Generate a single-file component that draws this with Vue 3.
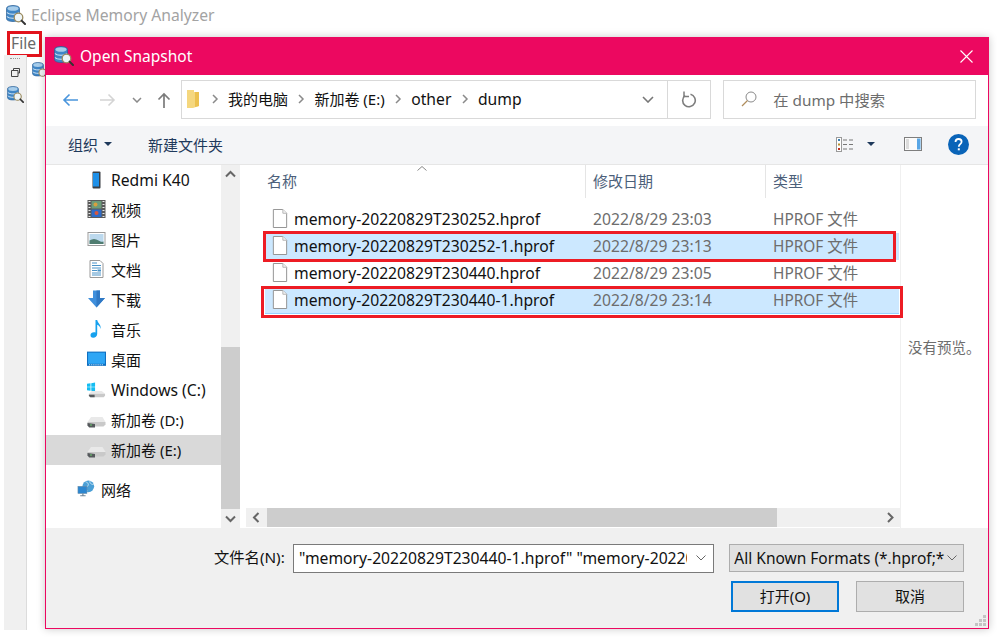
<script setup>
const navItems = [
  { label: 'Redmi K40', icon: 'i-phone', latin: true },
  { label: '视频', icon: 'i-video' },
  { label: '图片', icon: 'i-picture' },
  { label: '文档', icon: 'i-doc' },
  { label: '下载', icon: 'i-down' },
  { label: '音乐', icon: 'i-music' },
  { label: '桌面', icon: 'i-desk' },
  { label: 'Windows (C:)', icon: 'i-win', latin: true },
  { label: '新加卷 (D:)', icon: 'i-drive' },
  { label: '新加卷 (E:)', icon: 'i-drive', active: true },
]
const files = [
  { name: 'memory-20220829T230252.hprof', date: '2022/8/29 23:03' },
  { name: 'memory-20220829T230252-1.hprof', date: '2022/8/29 23:13', selected: true, mark: 'mark-a' },
  { name: 'memory-20220829T230440.hprof', date: '2022/8/29 23:05' },
  { name: 'memory-20220829T230440-1.hprof', date: '2022/8/29 23:14', selected: true, focus: true, mark: 'mark-b' },
]
const crumbs = [
  { text: '我的电脑' },
  { text: '新加卷 (E:)' },
  { text: 'other', latin: true },
  { text: 'dump', latin: true },
]
</script>

<template>
  <div class="page">
    <svg class="defs" width="0" height="0" aria-hidden="true">
      <defs>
        <symbol id="i-db" viewBox="0 0 20 20">
          <path d="M0.5 3.500C0.5 1.500 3.500 0.5 7 0.5s6.500 1 6.500 3v10c0 2-3 3-6.500 3s-6.500-1-6.500-3z" fill="#3f86c6" stroke="#2c5f93" stroke-width=".7"/>
          <ellipse cx="7" cy="3.500" rx="5.500" ry="2.300" fill="#a8cdea"/>
          <path d="M1 7.500c2 2.400 10 2.400 12 0M1 11.500c2 2.400 10 2.400 12 0" fill="none" stroke="#d6e8f6" stroke-width="1.100"/>
          <circle cx="12.500" cy="12.500" r="4.300" fill="#eef5f7" stroke="#9a8a5e" stroke-width="1.300"/>
          <path d="M15.600 15.600l3.400 3.400" stroke="#333" stroke-width="2" stroke-linecap="round"/>
        </symbol>
        <symbol id="i-file" viewBox="0 0 16 20">
          <path d="M1 .5h10l4 4v15H1z" fill="#fff" stroke="#8f8f8f"/>
          <path d="M11 .5v4h4" fill="#f2f2f2" stroke="#b5b5b5"/>
        </symbol>
        <symbol id="i-phone" viewBox="0 0 18 18">
          <rect x="5" y="0.500" width="8" height="17" rx="1" fill="#3a3f45"/>
          <rect x="5.500" y="2" width="6" height="13.500" fill="#1e90e8"/>
        </symbol>
        <symbol id="i-video" viewBox="0 0 18 18">
          <rect x="0" y="0" width="18" height="18" fill="#5a5a5a"/>
          <path d="M1 1.500h2M1 4.500h2M1 7.500h2M1 10.500h2M1 13.500h2M1 16.500h2M15 1.500h2M15 4.500h2M15 7.500h2M15 10.500h2M15 13.500h2M15 16.500h2" stroke="#e8e8e8" stroke-width="1.200"/>
          <rect x="4" y="1" width="10" height="7.500" fill="#6c9b7a"/>
          <rect x="4" y="9.500" width="10" height="7.500" fill="#2f6cc8"/>
          <circle cx="9" cy="13" r="2" fill="#d9573d"/>
          <circle cx="8" cy="4.500" r="2" fill="#d9a03d"/>
        </symbol>
        <symbol id="i-picture" viewBox="0 0 18 18">
          <rect x=".5" y="2.500" width="17" height="13" fill="#fff" stroke="#9c9c9c"/>
          <rect x="2" y="4" width="14" height="10" fill="#bcd9ee"/>
          <path d="M2 10.500c3-2 6-2 9 0s4 1 5 1V14H2z" fill="#4f7c70"/>
        </symbol>
        <symbol id="i-doc" viewBox="0 0 18 18">
          <path d="M2.500 .5h10l3 3v14h-13z" fill="#fff" stroke="#9a9a9a"/>
          <path d="M4.500 3h5M4.500 5.500h9M4.500 8h9M4.500 10.500h5M4.500 13h9M4.500 15h9" stroke="#4a93c8"/>
          <rect x="10" y="9.500" width="3.500" height="2" fill="#4a93c8"/>
        </symbol>
        <symbol id="i-down" viewBox="0 0 18 18">
          <path d="M5.500 .5h7v7.500H17.500L9 17.500.5 8h5z" fill="#3f8fdc"/>
          <path d="M9 .5h3.500V8h5L9 17.500z" fill="#2f78c4"/>
        </symbol>
        <symbol id="i-music" viewBox="0 0 18 18">
          <path d="M8 0h1.700c.3 3 4.300 4.500 3.300 9-.4-2.500-2-3.800-3.300-4.200V14c0 2.300-2 3.700-4 3.700S3 16.700 3 15c0-2 2.500-3.500 5-2.600z" fill="#16a1ee"/>
        </symbol>
        <symbol id="i-desk" viewBox="0 0 18 14">
          <rect x="0" y="0" width="18" height="13.500" fill="#0f6fc0"/>
          <rect x="1" y="1" width="16" height="10.500" fill="#2ea6f5"/>
          <path d="M2 12.500h14" stroke="#d5ecfb" stroke-dasharray="1 1"/>
        </symbol>
        <symbol id="i-drive" viewBox="0 -6 19 18">
          <path d="M4 1h11.500l3 5H.5z" fill="#e9e9e9"/>
          <path d="M.5 6h18v2.500L16.500 10.500H2L.5 9z" fill="#c9c9c9"/>
          <path d="M.5 7v2.500L2.200 11.500h5.800V8z" fill="#55595c"/>
          <rect x="3" y="8.500" width="2" height="1" fill="#6dd06d"/>
        </symbol>
        <symbol id="i-win" viewBox="0 0 20 16">
          <path d="M0 1.500l3.700-.5v3.500H0zM4.500.9L8.500 0v4.500h-4zM0 5.200h3.700v3.500L0 8.200zM4.500 5.200h4v4.300l-4-.7z" fill="#14bdf2"/>
          <path d="M5 9h10.500l3.500 3H2z" fill="#e9e9e9"/>
          <path d="M2 12h17v2l-1.500 1.500H3.500L2 14z" fill="#c9c9c9"/>
          <path d="M2 13v1.200l1.500 1.300H8V13z" fill="#55595c"/>
        </symbol>
        <symbol id="i-net" viewBox="0 0 20 20">
          <circle cx="12" cy="7" r="6.500" fill="#4a9fd6"/>
          <path d="M9 2c3 1 4 3 2 5s-3 3 0 5M14 1c-1 3 2 4 4 4" stroke="#cfe6f4" fill="none"/>
          <rect x="0.500" y="7" width="10" height="8" fill="#2b86d0" stroke="#6b8ba5" stroke-width=".6"/>
          <path d="M3 17.500h6M6 15v2.500" stroke="#6f8596" stroke-width="1.300"/>
        </symbol>
        <symbol id="i-chev" viewBox="0 0 10 10">
          <path d="M3 1l4 4-4 4" fill="none" stroke="#8a8a8a" stroke-width="1.500"/>
        </symbol>
      </defs>
    </svg>

    <header class="app-title">
      <svg class="app-icon"><use href="#i-db" /></svg>
      <span>Eclipse Memory Analyzer</span>
    </header>
    <nav class="menu"><span class="file-menu">File</span></nav>
    <div class="workbench">
      <aside class="side-tools">
        <i class="grip"></i>
        <svg class="restore" viewBox="0 0 9 9"><path d="M2.500 2V.5h6V5H7M.5 2.500h6.500V8.500H.5z" fill="none" stroke="#444"/></svg>
        <svg class="tool-db"><use href="#i-db" /></svg>
      </aside>
      <svg class="tab-db"><use href="#i-db" /></svg>
    </div>

    <section class="dialog">
      <div class="dlg-title">
        <svg class="dlg-icon"><use href="#i-db" /></svg>
        <span class="dlg-name">Open Snapshot</span>
        <svg class="dlg-close" viewBox="0 0 13 13"><path d="M.5.5l12 12M12.500.5l-12 12" stroke="#fff" stroke-width="1.100"/></svg>
      </div>

      <div class="nav-row">
        <svg class="n-back" viewBox="0 0 16 14"><path d="M16 7H2M7.500 1.500L2 7l5.500 5.500" fill="none" stroke="#4a95dc" stroke-width="1.600"/></svg>
        <svg class="n-fwd" viewBox="0 0 16 14"><path d="M0 7h14M8.500 1.500L14 7l-5.500 5.500" fill="none" stroke="#d4d4d4" stroke-width="1.600"/></svg>
        <svg class="n-drop" viewBox="0 0 10 6"><path d="M1 1l4 4 4-4" fill="none" stroke="#8a8a8a" stroke-width="1.500"/></svg>
        <svg class="n-up" viewBox="0 0 14 16"><path d="M7 16V2M1.500 7.500L7 2l5.500 5.500" fill="none" stroke="#7b7b7b" stroke-width="1.700"/></svg>
        <div class="addr">
          <div class="addr-path">
            <svg class="folder" viewBox="0 0 12 18"><path d="M0 0h7v2h5v14l-6 2H0z" fill="#f5d77e"/><path d="M8 2h4v14l-4 1z" fill="#ecc14f"/></svg>
            <template v-for="c in crumbs" :key="c.text">
              <svg class="crumb-chev"><use href="#i-chev" /></svg>
              <span class="crumb" :class="{ latin: c.latin }">{{ c.text }}</span>
            </template>
          </div>
          <svg class="addr-drop" viewBox="0 0 12 7"><path d="M1 1l5 5 5-5" fill="none" stroke="#777" stroke-width="1.600"/></svg>
          <div class="addr-refresh">
            <svg viewBox="0 0 16 17" width="16" height="17"><path d="M9.500 3.300A6.300 6.300 0 1 1 4 4.500" fill="none" stroke="#7d7d7d" stroke-width="1.600"/><path d="M3 .5v5h5" fill="none" stroke="#7d7d7d" stroke-width="1.500"/></svg>
          </div>
        </div>
        <div class="search">
          <svg class="search-i" viewBox="0 0 16 16"><circle cx="10" cy="6" r="5" fill="none" stroke="#8a8a8a"/><path d="M6.500 9.500L1 15" stroke="#b08d5c" stroke-width="1.200"/></svg>
          <span>在 dump 中搜索</span>
        </div>
      </div>

      <div class="toolbar">
        <span class="tb-org">组织</span>
        <i class="tb-caret"></i>
        <span class="tb-new">新建文件夹</span>
        <svg class="tb-view" viewBox="0 0 18 15"><rect x=".5" y=".5" width="5" height="14" fill="#fff" stroke="#9a9a9a"/><rect x="2" y="2" width="2" height="2" fill="#3a7fb0"/><rect x="2" y="6.500" width="2" height="2" fill="#b9912f"/><rect x="2" y="11" width="2" height="2" fill="#c03020"/><path d="M7 3h4M13 3h4M7 7.500h4M13 7.500h4M7 12h4M13 12h4" stroke="#777"/></svg>
        <i class="tb-caret tb-caret2"></i>
        <svg class="tb-pane" viewBox="0 0 18 14"><rect x=".5" y=".5" width="17" height="13" fill="#fbfbfb" stroke="#7e7e7e"/><rect x="13" y="1.500" width="3.500" height="11" fill="#5aa7e6"/><rect x="2" y="2" width="3" height="10" fill="#dcdcdc"/></svg>
        <svg class="tb-help" viewBox="0 0 21 21"><circle cx="10.500" cy="10.500" r="10.500" fill="#0a64b8"/><path d="M7.500 8c0-2 1.300-3 3.100-3s3 1 3 2.700c0 2.500-2.800 2.500-2.800 5" fill="none" stroke="#fff" stroke-width="1.800"/><rect x="9.800" y="14.300" width="2" height="2" fill="#fff"/></svg>
      </div>

      <div class="dlg-body">
        <div class="nav-pane">
          <ul class="nav-list">
            <li v-for="n in navItems" :key="n.label" class="nav-item" :class="{ active: n.active, latin: n.latin }">
              <svg class="nav-icon"><use :href="'#' + n.icon" /></svg>
              <span>{{ n.label }}</span>
            </li>
            <li class="nav-item nav-net">
              <svg class="nav-icon"><use href="#i-net" /></svg>
              <span>网络</span>
            </li>
          </ul>
          <div class="vscroll">
            <svg class="sb-btn" viewBox="0 0 19 19"><path d="M5 11.500l4.500-4.500 4.500 4.500" fill="none" stroke="#666" stroke-width="2"/></svg>
            <div class="v-track"><div class="v-thumb"></div></div>
            <svg class="sb-btn" viewBox="0 0 19 19"><path d="M5 7.500l4.500 4.500 4.500-4.500" fill="none" stroke="#666" stroke-width="2"/></svg>
          </div>
        </div>

        <div class="list-pane">
          <div class="list-head">
            <span class="h-name">名称<svg class="sort" viewBox="0 0 10 5"><path d="M.5 4.500L5 .5l4.500 4" fill="none" stroke="#888"/></svg></span>
            <span class="h-date">修改日期</span>
            <span class="h-type">类型</span>
          </div>
          <div class="rows">
            <div v-for="f in files" :key="f.name" class="row" :class="{ selected: f.selected, focus: f.focus }">
              <svg class="row-file"><use href="#i-file" /></svg>
              <span class="row-name">{{ f.name }}</span>
              <span class="row-date">{{ f.date }}</span>
              <span class="row-type">HPROF 文件</span>
              <i v-if="f.mark" class="mark" :class="f.mark"></i>
            </div>
          </div>
          <div class="hscroll">
            <svg class="hs-btn" viewBox="0 0 21 19"><path d="M12.500 5L8 9.500l4.500 4.500" fill="none" stroke="#666" stroke-width="2"/></svg>
            <div class="h-track"><div class="h-thumb"></div></div>
            <svg class="hs-btn" viewBox="0 0 21 19"><path d="M9 5l4.500 4.500L9 14" fill="none" stroke="#666" stroke-width="2"/></svg>
          </div>
        </div>

        <div class="preview"><span>没有预览。</span></div>
      </div>

      <footer class="dlg-foot">
        <div class="foot-row">
          <label class="fn-label">文件名(N):</label>
          <div class="fn-input">
            <span class="fn-text">"memory-20220829T230440-1.hprof" "memory-20220</span>
            <svg class="mini-chev" viewBox="0 0 10 6"><path d="M.5.5L5 5 9.500.5" fill="none" stroke="#666"/></svg>
          </div>
          <div class="fmt">
            <span class="fmt-text">All Known Formats (*.hprof;*</span>
            <svg class="mini-chev" viewBox="0 0 10 6"><path d="M.5.5L5 5 9.500.5" fill="none" stroke="#666"/></svg>
          </div>
        </div>
        <div class="btn-row">
          <button class="btn primary">打开(O)</button>
          <button class="btn">取消</button>
        </div>
        <svg class="grip-corner" viewBox="0 0 12 12"><path d="M8 0h3v3H8zM4 4h3v3H4zM8 4h3v3H8zM0 8h3v3H0zM4 8h3v3H4zM8 8h3v3H8z" fill="#c4c4c4"/></svg>
      </footer>
    </section>
  </div>
</template>

<style>
html, body { margin: 0; background: #fff; }
</style>

<style scoped>
.page {
  position: relative;
  width: 997px;
  height: 637px;
  overflow: hidden;
  background: #fff;
  font-family: "Noto Sans", "Noto Sans CJK SC", sans-serif;
  font-size: 15px;
  color: #111;
}
.defs { position: absolute; }
.app-title {
  display: flex;
  align-items: center;
  box-sizing: border-box;
  height: 31px;
  padding: 0 0 1px 6px;
  font-size: 15.7px;
  color: #a3a3a3;
}
.app-icon { width: 20px; height: 20px; margin-right: 5px; }
.menu { height: 24px; padding-left: 7px; }
.file-menu {
  display: block;
  box-sizing: border-box;
  width: 35px;
  height: 26px;
  border: 3px solid #e2131c;
  padding-left: 1px;
  line-height: 19px;
  font-size: 15.7px;
  color: #6a6a6a;
}
.workbench { display: flex; height: 575px; padding-left: 4px; }
.side-tools {
  display: flex;
  flex-direction: column;
  align-items: center;
  width: 23px;
  background: #f0f0f0;
  border-right: 1px solid #dcdcdc;
  box-sizing: border-box;
}
.grip { width: 10px; height: 1px; margin-top: 3px; border-top: 1px dotted #999; }
.restore { width: 9px; height: 9px; margin-top: 8px; }
.tool-db { width: 17px; height: 17px; margin-top: 9px; }
.tab-db { width: 17px; height: 17px; margin: 7px 0 0 5px; }

.dialog {
  position: absolute;
  left: 45px;
  top: 37px;
  width: 944px;
  height: 592px;
  box-sizing: border-box;
  border: 1px solid #ec0860;
  display: flex;
  flex-direction: column;
  background: #fff;
  box-shadow: 0 0 8px rgba(0, 0, 0, .22);
}
.dlg-title {
  display: flex;
  align-items: center;
  box-sizing: border-box;
  flex: none;
  height: 37px;
  padding: 0 15px 1px 8px;
  background: #ec0860;
  color: #fff;
}
.dlg-icon { width: 20px; height: 20px; margin-right: 6px; }
.dlg-name { font-size: 15.5px; flex: 1; }
.dlg-close { width: 13px; height: 13px; }

.nav-row {
  position: relative;
  display: flex;
  align-items: center;
  flex: none;
  height: 51px;
  padding: 0 12px 2px 16px;
  box-sizing: border-box;
}
.n-back { width: 16px; height: 14px; margin-right: 22px; }
.n-fwd { width: 16px; height: 14px; margin-right: 16px; }
.n-drop { width: 10px; height: 6px; margin-right: 15px; }
.n-up { width: 14px; height: 16px; margin-right: 10px; }
.addr {
  display: flex;
  align-items: center;
  box-sizing: border-box;
  width: 531px;
  height: 39px;
  border: 1px solid #d9d9d9;
}
.addr-path { flex: 1; display: flex; align-items: center; padding: 0 0 2px 5px; }
.folder { width: 12px; height: 18px; margin-right: 11px; }
.crumb-chev { width: 10px; height: 10px; margin-right: 8px; }
.crumb { margin-right: 8.5px; color: #111; }
.crumb.latin { font-size: 15.7px; }
.addr-drop { width: 12px; height: 7px; margin-right: 13px; }
.addr-refresh {
  display: flex;
  align-items: center;
  justify-content: center;
  box-sizing: border-box;
  width: 43px;
  height: 100%;
  border-left: 1px solid #d9d9d9;
}
.search {
  display: flex;
  align-items: center;
  box-sizing: border-box;
  width: 253px;
  height: 39px;
  margin-left: 12px;
  padding: 0 0 1px 17px;
  border: 1px solid #d9d9d9;
  color: #6d6d6d;
  font-size: 15.3px;
}
.search-i { width: 16px; height: 16px; margin-right: 16px; }

.toolbar {
  display: flex;
  align-items: center;
  flex: none;
  height: 39px;
  padding: 0 0 2px 22px;
  background: #f4f5f7;
  border-bottom: 1px solid #e6e6e6;
  box-sizing: border-box;
  color: #1e395b;
}
.tb-caret {
  width: 0;
  height: 0;
  margin-left: 6px;
  border: 4px solid transparent;
  border-top: 4px solid #1e395b;
  border-bottom: 0;
}
.tb-new { margin-left: 36px; flex: 1; }
.tb-view { width: 18px; height: 15px; margin-left: 1px; }
.tb-caret2 { margin: 0 0 0 13px; }
.tb-pane { width: 18px; height: 14px; margin-left: 29px; }
.tb-help { width: 21px; height: 21px; margin: 0 19px 0 26px; }

.dlg-body { display: flex; flex: none; height: 363px; }
.nav-pane { display: flex; width: 194px; }
.nav-list { width: 175px; margin: 0; padding: 0; list-style: none; }
.nav-item {
  display: flex;
  align-items: center;
  box-sizing: border-box;
  height: 30px;
  padding: 0 0 2px 41px;
  color: #111;
}
.nav-item.latin { font-size: 15.7px; padding-bottom: 0; }
.nav-item.active { background: #d9d9d9; }
.nav-net { padding-left: 31px; margin-top: 10px; }
.nav-icon { width: 19px; height: 18px; margin-right: 5px; }
.vscroll { display: flex; flex-direction: column; width: 19px; background: #f0f0f0; }
.sb-btn { flex: none; width: 19px; height: 19px; }
.v-track { flex: 1; display: flex; flex-direction: column; justify-content: flex-end; }
.v-thumb { height: 162px; background: #cdcdcd; }

.list-pane { display: flex; flex-direction: column; width: 654px; margin-left: 6px; }
.list-head { display: flex; flex: none; height: 33px; color: #4c607a; line-height: 33px; }
.h-name { position: relative; box-sizing: border-box; width: 340px; padding-left: 21px; border-right: 1px solid #e5e5e5; }
.sort { position: absolute; left: 171px; top: 1px; width: 10px; height: 5px; }
.h-date { box-sizing: border-box; width: 180px; padding-left: 7px; border-right: 1px solid #e5e5e5; }
.h-type { padding-left: 7px; }
.rows { flex: 1; padding: 8px 0 0 19px; }
.row {
  position: relative;
  display: flex;
  align-items: center;
  box-sizing: border-box;
  width: 634px;
  height: 27px;
  padding-bottom: 2px;
  font-size: 15.7px;
}
.row.selected { background: #cce8ff; }
.row.focus { border-bottom: 1px solid #99d1ff; padding-bottom: 1px; }
.row-file { width: 16px; height: 19px; margin: 0 6px 0 7px; flex: none; }
.row-name { width: 299px; flex: none; color: #111; }
.row-date { width: 180px; flex: none; color: #6d6d6d; }
.row-type { color: #6d6d6d; font-size: 15.4px; }
.mark { position: absolute; z-index: 1; border: 3px solid #ed1c24; pointer-events: none; }
.mark-a { left: -2px; right: 3px; top: -2px; bottom: -2px; }
.mark-b { left: -4px; right: -4px; top: -1px; bottom: -5px; }
.hscroll { display: flex; flex: none; height: 19px; margin-bottom: 1px; background: #f0f0f0; }
.hs-btn { flex: none; width: 21px; height: 19px; }
.h-track { flex: 1; }
.h-thumb { width: 510px; height: 100%; background: #cdcdcd; }

.preview {
  flex: 1;
  border-left: 1px solid #f0f0f0;
  color: #6d6d6d;
  padding: 171px 0 0 7px;
  font-size: 14.5px;
}

.dlg-foot {
  position: relative;
  flex: 1;
  background: #f0f0f0;
  padding: 16px 24px 0 168px;
}
.foot-row { display: flex; align-items: flex-start; }
.fn-label { width: 79px; flex: none; height: 29px; line-height: 27px; font-size: 15.3px; }
.fn-input {
  display: flex;
  align-items: center;
  box-sizing: border-box;
  width: 422px;
  height: 29px;
  padding: 0 7px 1px 5px;
  background: #fff;
  border: 1px solid #7a7a7a;
  font-size: 15.7px;
}
.fn-text { width: 388px; flex: none; overflow: hidden; white-space: nowrap; margin-right: 9px; }
.mini-chev { width: 10px; height: 6px; flex: none; }
.fmt {
  display: flex;
  align-items: center;
  box-sizing: border-box;
  width: 235px;
  height: 28px;
  margin-left: 15px;
  padding: 0 6px 1px 4px;
  background: #e1e1e1;
  border: 1px solid #adadad;
  font-size: 15.5px;
}
.fmt-text { flex: 1; overflow: hidden; white-space: nowrap; }
.btn-row { display: flex; justify-content: flex-end; gap: 17px; margin-top: 8px; }
.btn {
  width: 108px;
  height: 31px;
  box-sizing: border-box;
  background: #e1e1e1;
  border: 1px solid #adadad;
  font: inherit;
  color: #111;
  padding: 0 0 2px;
}
.btn.primary { border: 2px solid #0078d7; }
.grip-corner { position: absolute; right: 1px; bottom: 1px; width: 12px; height: 12px; }
</style>
